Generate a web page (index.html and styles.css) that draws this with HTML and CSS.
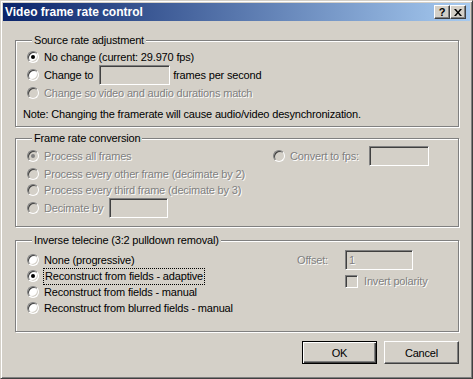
FILE: index.html
```html
<!DOCTYPE html>
<html lang="en">
<head>
  <meta charset="UTF-8" />
  <title>Video frame rate control</title>
  <link rel="stylesheet" href="styles.css">
</head>
<body>
  <div class="window">
    <div class="titlebar">
      <span class="title">Video frame rate control</span>
      <div class="title-btns">
        <span class="tbtn help">?</span>
        <span class="tbtn">
          <svg width="8" height="7" viewBox="0 0 8 7"><path d="M0 0h2l2 2.5L6 0h2L5 3.5 8 7H6L4 4.5 2 7H0l3-3.5z" fill="#000"/></svg>
        </span>
      </div>
    </div>

    <div class="content">
      <!-- source rate -->
      <fieldset class="group g-source">
        <legend>Source rate adjustment</legend>
        <div class="row"><span class="radio on"></span>No change (current: 29.970 fps)</div>
        <div class="row"><span class="radio"></span>Change to <span class="field f-change"></span> frames per second</div>
        <div class="row off"><span class="radio"></span>Change so video and audio durations match</div>
        <div class="note">Note: Changing the framerate will cause audio/video desynchronization.</div>
      </fieldset>

      <!-- frame rate conversion -->
      <fieldset class="group g-convert">
        <legend>Frame rate conversion</legend>
        <div class="cols">
          <div class="list">
            <div class="row off r1"><span class="radio on"></span>Process all frames</div>
            <div class="row off r2"><span class="radio"></span>Process every other frame (decimate by 2)</div>
            <div class="row off r3"><span class="radio"></span>Process every third frame (decimate by 3)</div>
            <div class="row off r4"><span class="radio"></span>Decimate by <span class="field f-decimate"></span></div>
          </div>
          <div class="side">
            <div class="row off"><span class="radio"></span>Convert to fps: <span class="field f-fps"></span></div>
          </div>
        </div>
      </fieldset>

      <!-- inverse telecine -->
      <fieldset class="group g-ivtc">
        <legend>Inverse telecine (3:2 pulldown removal)</legend>
        <div class="cols">
          <div class="list">
            <div class="row"><span class="radio"></span>None (progressive)</div>
            <div class="row"><span class="radio on"></span><span class="focus">Reconstruct from fields - adaptive</span></div>
            <div class="row"><span class="radio"></span>Reconstruct from fields - manual</div>
            <div class="row"><span class="radio"></span>Reconstruct from blurred fields - manual</div>
          </div>
          <div class="side offset-grid">
            <span class="off lbl">Offset:</span>
            <span class="field f-offset off">1</span>
            <span></span>
            <div class="row off"><span class="check"></span>Invert polarity</div>
          </div>
        </div>
      </fieldset>

      <div class="buttons">
        <span class="btn default">OK</span>
        <span class="btn">Cancel</span>
      </div>
    </div>
  </div>
</body>
</html>
```

FILE: styles.css
```css
body {
  margin: 0;
  background: #d4d0c8;
  font-family: "Liberation Sans", Arial, sans-serif;
  font-size: 11px;
  letter-spacing: -0.17px;
  color: #000;
}
.window {
  width: 473px;
  height: 379px;
  box-sizing: border-box;
  background: #d4d0c8;
  border: 1px solid;
  border-color: #d4d0c8 #404040 #404040 #d4d0c8;
  box-shadow: inset 1px 1px #fff, inset -1px -1px #808080;
  padding: 2px;
}
.titlebar {
  height: 18px;
  background: linear-gradient(to right, #0a246a, #a6caf0);
  display: flex;
  align-items: center;
  padding: 0 4px 0 2px;
}
.title {
  color: #fff;
  font-weight: 700;
  font-size: 12px;
  letter-spacing: 0;
  flex: 1;
}
.title-btns {
  display: flex;
}
.tbtn {
  width: 16px;
  height: 14px;
  box-sizing: border-box;
  border: 1px solid;
  border-color: #fff #404040 #404040 #fff;
  box-shadow: inset -1px -1px #808080;
  background: #d4d0c8;
  display: flex;
  align-items: center;
  justify-content: center;
  font-weight: 700;
  font-size: 11px;
}
.content {
  padding: 13px 11px 0 12px;
}
.group {
  margin: 0;
  border: 1px solid #808080;
  box-shadow: inset 1px 1px #fff, 1px 1px #fff;
  min-width: 0;
  width: 444px;
  box-sizing: border-box;
}
.group legend {
  padding: 0 2px;
  margin-left: 5px;
  line-height: 13px;
  background: #d4d0c8;
}
.row {
  display: flex;
  align-items: center;
  height: 18px;
  white-space: nowrap;
}
.off {
  color: #808080;
  text-shadow: 1px 1px 0 #fff;
}
.radio {
  width: 12px;
  height: 12px;
  box-sizing: border-box;
  border-radius: 50%;
  border: 1px solid;
  border-color: #808080 #fff #fff #808080;
  box-shadow: inset 1px 1px #404040, inset -1px -1px #d4d0c8;
  background: #fff;
  position: relative;
  flex: none;
  margin-right: 5px;
}
.off .radio {
  background: #d4d0c8;
}
.radio.on::after {
  content: "";
  position: absolute;
  left: 3px;
  top: 3px;
  width: 4px;
  height: 4px;
  border-radius: 50%;
  background: #000;
}
.off .radio.on::after {
  background: #808080;
}
.check {
  width: 13px;
  height: 13px;
  box-sizing: border-box;
  border: 1px solid;
  border-color: #808080 #fff #fff #808080;
  box-shadow: inset 1px 1px #404040, inset -1px -1px #d4d0c8;
  background: #d4d0c8;
  flex: none;
  margin-right: 6px;
}
.field {
  display: inline-block;
  height: 20px;
  box-sizing: border-box;
  border: 1px solid;
  border-color: #808080 #fff #fff #808080;
  box-shadow: inset 1px 1px #404040, inset -1px -1px #d4d0c8;
  background: #d4d0c8;
  padding: 2px 3px;
  line-height: 14px;
}
.focus {
  outline: 1px dotted #000;
  padding: 0 1px;
  line-height: 15px;
}

/* source */
.g-source {
  padding: 1px 11px 3px 11px;
}
.f-change {
  width: 71px;
  margin: 0 3px 0 6px;
}
.note {
  margin: 3px 0 0 -4px;
  height: 18px;
  line-height: 18px;
}

/* conversion */
.g-convert {
  margin-top: 5px;
  padding: 2px 11px 8px 11px;
}
.cols {
  display: flex;
}
.list {
  width: 246px;
}
.g-convert .r2 { height: 17px; }
.g-convert .r3 { height: 16px; }
.g-convert .r4 { height: 20px; }
.f-decimate {
  width: 59px;
  margin-left: 6px;
}
.f-fps {
  width: 60px;
  margin-left: 10px;
}

/* ivtc */
.g-ivtc {
  margin-top: 7px;
  padding: 5px 11px 15px 11px;
}
.g-ivtc .row {
  height: 16px;
}
.offset-grid {
  margin-left: 24px;
  display: grid;
  grid-template-columns: 48px 68px;
  grid-template-rows: 20px 22px;
  align-items: center;
  margin-top: -2px;
}
.f-offset {
  width: 68px;
}

.buttons {
  display: flex;
  justify-content: flex-end;
  gap: 7px;
  margin-top: 9px;
  width: 444px;
}
.btn {
  width: 75px;
  height: 23px;
  box-sizing: border-box;
  border: 1px solid;
  border-color: #fff #404040 #404040 #fff;
  box-shadow: inset -1px -1px #808080;
  display: flex;
  align-items: center;
  justify-content: center;
}
.btn.default {
  border: 1px solid #000;
  box-shadow: inset 1px 1px #fff, inset -1px -1px #404040, inset -2px -2px #808080;
}
```
